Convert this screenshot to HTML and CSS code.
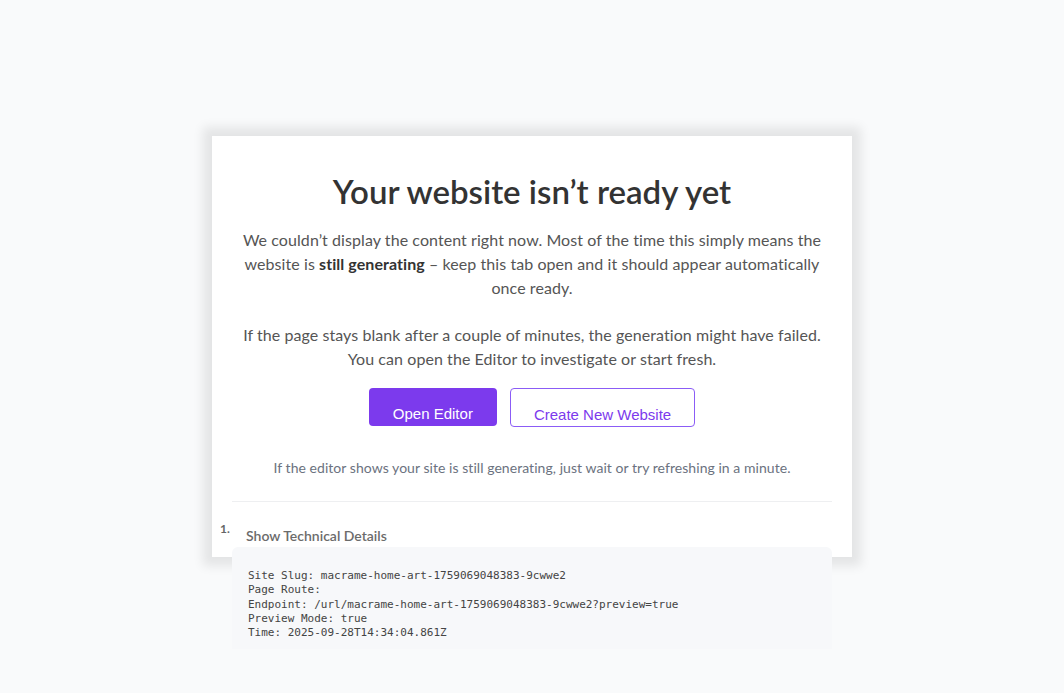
FILE: index.html
```html
<!DOCTYPE html>
<html lang="en">
<head>
<meta charset="utf-8">
<title>Your website isn’t ready yet</title>
<link rel="stylesheet" href="styles.css">
</head>
<body>
<div class="card">
  <h1 class="title">Your website isn’t ready yet</h1>
  <p class="lead">We couldn’t display the content right now. Most of the time this simply means the website is <strong>still generating</strong> – keep this tab open and it should appear automatically once ready.</p>
  <p class="lead second">If the page stays blank after a couple of minutes, the generation might have failed. You can open the Editor to investigate or start fresh.</p>
  <div class="actions">
    <button class="btn btn-primary">Open Editor</button>
    <button class="btn btn-outline">Create New Website</button>
  </div>
  <p class="note">If the editor shows your site is still generating, just wait or try refreshing in a minute.</p>
  <hr class="divider">
  <div class="tech">
    <div class="tech-head"><span class="marker">1.</span><span class="summary">Show Technical Details</span></div>
    <pre class="tech-box">Site Slug: macrame-home-art-1759069048383-9cwwe2
Page Route: 
Endpoint: /url/macrame-home-art-1759069048383-9cwwe2?preview=true
Preview Mode: true
Time: 2025-09-28T14:34:04.861Z</pre>
  </div>
</div>
</body>
</html>
```
FILE: styles.css
```css
html, body {
  margin: 0;
  padding: 0;
}
body {
  background: #f9fafb;
  font-family: Lato, "Open Sans", sans-serif;
  color: #444;
  height: 693px;
  overflow: hidden;
}
.card {
  box-sizing: border-box;
  width: 640px;
  height: 421px;
  margin: 136px auto 0;
  background: #fff;
  padding: 36px 20px 0;
  box-shadow: 0 0 10px 9px rgba(0, 0, 0, 0.085);
  text-align: center;
}
.title {
  margin: 0 0 18px;
  font-size: 33px;
  line-height: 38px;
  font-weight: 600;
  color: #333;
}
.lead {
  margin: 0;
  font-size: 16px;
  line-height: 24px;
  letter-spacing: 0.07px;
  color: #555;
}
.lead strong {
  color: #333;
  font-weight: 700;
}
.second {
  margin-top: 23px;
}
.actions {
  display: flex;
  justify-content: center;
  gap: 13px;
  margin-top: 17px;
}
.btn {
  font-family: "Liberation Sans", Arial, sans-serif;
  font-size: 15px;
  line-height: 17px;
  border-radius: 4px;
  cursor: pointer;
}
.btn-primary {
  height: 38px;
  background: #7c3aed;
  color: #fff;
  border: 0;
  padding: 17px 24px 4px;
}
.btn-outline {
  height: 39px;
  background: #fff;
  color: #7c3aed;
  border: 1px solid #8b5cf6;
  padding: 17px 23px 3px;
}
.note {
  margin: 30px 0 0;
  font-size: 14px;
  line-height: 21px;
  letter-spacing: 0.05px;
  color: #6b7280;
}
.divider {
  border: 0;
  border-top: 1px solid #eeeff1;
  margin: 23px 0 0;
}
.tech {
  text-align: left;
}
.tech-head {
  display: flex;
  align-items: flex-start;
  margin-left: -12px;
  margin-top: 19px;
}
.marker {
  width: 26px;
  font-size: 12px;
  line-height: 16px;
  font-weight: 700;
  color: #666;
}
.summary {
  padding-top: 5px;
  font-size: 14px;
  line-height: 20px;
  font-weight: 600;
  color: #6b6b6b;
}
.tech-box {
  margin: 1px 0 0;
  background: #f7f8fa;
  border-radius: 6px 6px 0 0;
  padding: 22px 16px 9px;
  font-family: "DejaVu Sans Mono", monospace;
  font-size: 11px;
  line-height: 14.3px;
  color: #444;
}
```
